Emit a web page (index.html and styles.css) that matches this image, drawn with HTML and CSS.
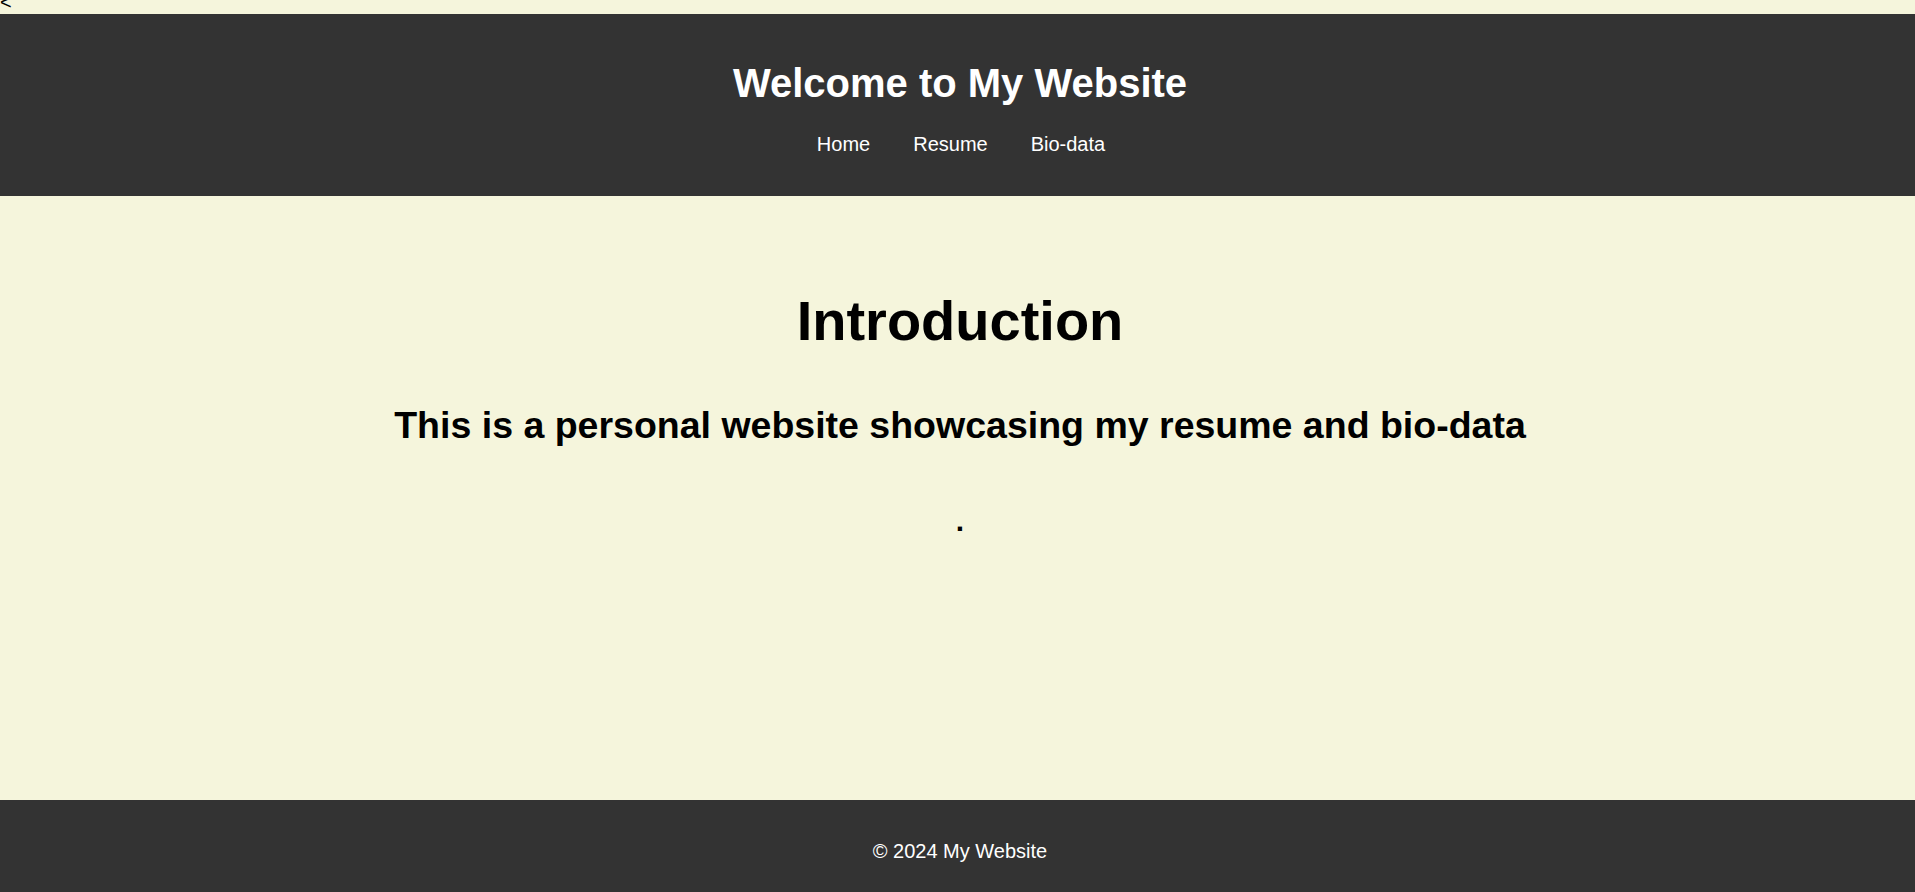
FILE: index.html
```html
<!DOCTYPE html>
<html lang="en">
<head>
<meta charset="utf-8">
<title>My Website</title>
<link rel="stylesheet" href="styles.css">
</head>
<body>
<div class="stray"><div class="stray-text">&lt;</div></div>
<header class="site-header">
  <h1 class="site-title">Welcome to My Website</h1>
  <nav class="site-nav">
    <a href="#" class="nav-link">Home</a>
    <a href="#" class="nav-link">Resume</a>
    <a href="#" class="nav-link">Bio-data</a>
  </nav>
</header>
<main class="content">
  <h2 class="intro-title">Introduction</h2>
  <h3 class="intro-sub">This is a personal website showcasing my resume and bio-data</h3>
  <p class="intro-dot">.</p>
</main>
<footer class="site-footer">
  <p class="footer-text">&copy; 2024 My Website</p>
</footer>
</body>
</html>
```

FILE: styles.css
```css
html, body {
  margin: 0;
  padding: 0;
}

body {
  background: #f5f5dc;
  font-family: "Liberation Sans", Arial, sans-serif;
  color: #000;
  min-height: 100vh;
  display: flex;
  flex-direction: column;
}

.stray {
  height: 14px;
  overflow: hidden;
}

.stray-text {
  font-size: 20px;
  line-height: 23px;
  margin-top: -9px;
  color: #000;
}

.site-header {
  background: #333333;
  color: #ffffff;
  text-align: center;
  padding: 46px 0 40px 5px;
}

.site-title {
  margin: 0;
  font-size: 40px;
  line-height: 46px;
  font-weight: bold;
}

.site-nav {
  margin-top: 27px;
  display: flex;
  justify-content: center;
  gap: 43px;
  padding-left: 2px;
}

.nav-link {
  color: #ffffff;
  text-decoration: none;
  font-size: 20px;
  line-height: 23px;
}

.content {
  flex: 1;
  text-align: center;
  padding: 95px 0 0 5px;
}

.intro-title {
  margin: 0;
  font-size: 56px;
  line-height: 60px;
  font-weight: bold;
}

.intro-sub {
  margin: 55px 0 0;
  font-size: 37.5px;
  line-height: 39px;
  font-weight: bold;
}

.intro-dot {
  margin: 59px 0 0;
  font-size: 30px;
  line-height: 34px;
  font-weight: bold;
}

.site-footer {
  background: #333333;
  color: #ffffff;
  text-align: center;
  padding: 40px 0 29px 5px;
}

.footer-text {
  margin: 0;
  font-size: 20px;
  line-height: 23px;
}
```
